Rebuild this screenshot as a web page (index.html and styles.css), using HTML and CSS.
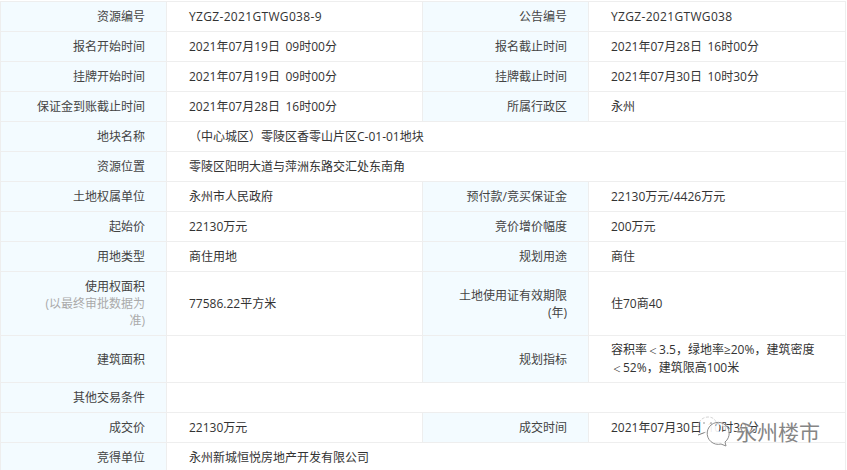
FILE: index.html
```html
<!DOCTYPE html>
<html lang="zh-CN">
<head>
<meta charset="utf-8">
<title>地块信息</title>
<link rel="stylesheet" href="styles.css">
</head>
<body>
<table class="info">
<colgroup><col class="c1"><col class="c2"><col class="c3"><col class="c4"></colgroup>
<tbody>
<tr><th>资源编号</th><td class="code">YZGZ-2021GTWG038-9</td><th>公告编号</th><td class="code">YZGZ-2021GTWG038</td></tr>
<tr><th>报名开始时间</th><td>2021年07月19日 09时00分</td><th>报名截止时间</th><td>2021年07月28日 16时00分</td></tr>
<tr><th>挂牌开始时间</th><td>2021年07月19日 09时00分</td><th>挂牌截止时间</th><td>2021年07月30日 10时30分</td></tr>
<tr><th>保证金到账截止时间</th><td>2021年07月28日 16时00分</td><th>所属行政区</th><td>永州</td></tr>
<tr><th>地块名称</th><td colspan="3">（中心城区）零陵区香零山片区C-01-01地块</td></tr>
<tr><th>资源位置</th><td colspan="3">零陵区阳明大道与萍洲东路交汇处东南角</td></tr>
<tr><th>土地权属单位</th><td>永州市人民政府</td><th>预付款/竞买保证金</th><td>22130万元/4426万元</td></tr>
<tr><th>起始价</th><td>22130万元</td><th>竞价增价幅度</th><td>200万元</td></tr>
<tr><th>用地类型</th><td>商住用地</td><th>规划用途</th><td>商住</td></tr>
<tr class="tall"><th>使用权面积<br><span class="note">(以最终审批数据为准)</span></th><td>77586.22平方米</td><th>土地使用证有效期限(年)</th><td>住70商40</td></tr>
<tr class="mid"><th>建筑面积</th><td></td><th>规划指标</th><td>容积率<span class="lt">＜</span>3.5，绿地率≥20%，建筑密度<span class="lt">＜</span>52%，建筑限高100米</td></tr>
<tr><th>其他交易条件</th><td colspan="3"></td></tr>
<tr><th>成交价</th><td>22130万元</td><th>成交时间</th><td>2021年07月30日 10时30分</td></tr>
<tr><th>竞得单位</th><td colspan="3">永州新城恒悦房地产开发有限公司</td></tr>
</tbody>
</table>
<div class="mark">
<svg class="mark-icon" width="40" height="36" viewBox="0 0 40 36" fill="none">
<circle cx="17" cy="18" r="8" fill="#fff" fill-opacity=".9"/>
<path d="M4 13 C4 7 9 3 14 3 C18 3 21 5 22 8" stroke="#d4d4d4" stroke-dasharray="3 1.500"/>
<path d="M4 21 L12 18" stroke="#777"/>
<circle cx="23" cy="20" r="11" stroke="#fff" stroke-width="3" stroke-opacity=".7"/>
<path d="M31 28 A11 11 0 1 0 27 30 L32 32 Z" stroke="#8c8c8c"/>
<circle cx="10" cy="9" r="1" fill="#bbb"/>
<circle cx="17" cy="9" r="1" fill="#bbb"/>
</svg>
<span class="mark-text">永州楼市</span>
</div>
</body>
</html>
```
FILE: styles.css
```css
html, body {
  margin: 0;
  padding: 0;
  background: #fff;
  overflow: hidden;
}
body {
  position: relative;
  width: 847px;
  height: 470px;
  padding-top: 1px;
  box-sizing: border-box;
  font-family: "Open Sans", "Noto Sans CJK SC", sans-serif;
  font-size: 12px;
  line-height: 17px;
  color: #333;
}
.info {
  width: 845px;
  table-layout: fixed;
  border-collapse: collapse;
}
.c1 { width: 166px; }
.c2 { width: 256px; }
.c3 { width: 166px; }
.c4 { width: 257px; }
.info th, .info td {
  height: 29px;
  padding: 0;
  border: 1px solid #eee;
  box-sizing: content-box;
  vertical-align: middle;
}
.info th {
  padding: 0 21px 0 35px;
  background: #f3fbff;
  font-weight: 400;
  text-align: right;
  color: #444;
}
.info td {
  padding: 0 20px 0 22px;
  text-align: left;
  word-spacing: 2.500px;
}
.info .code { letter-spacing: .33px; }
.lt {
  padding: 0 2px;
  font-size: 8px;
}
.tall th, .tall td { height: 63px; }
.mid th, .mid td { height: 46px; }
.note { color: #aaa; }
.mark {
  position: absolute;
  left: 694px;
  top: 414px;
  display: flex;
  align-items: center;
  gap: 2px;
}
.mark-text {
  font-size: 21px;
  line-height: 26px;
  color: #858585;
  text-shadow: 0 0 2px #fff, 0 0 2px #fff;
}
```
